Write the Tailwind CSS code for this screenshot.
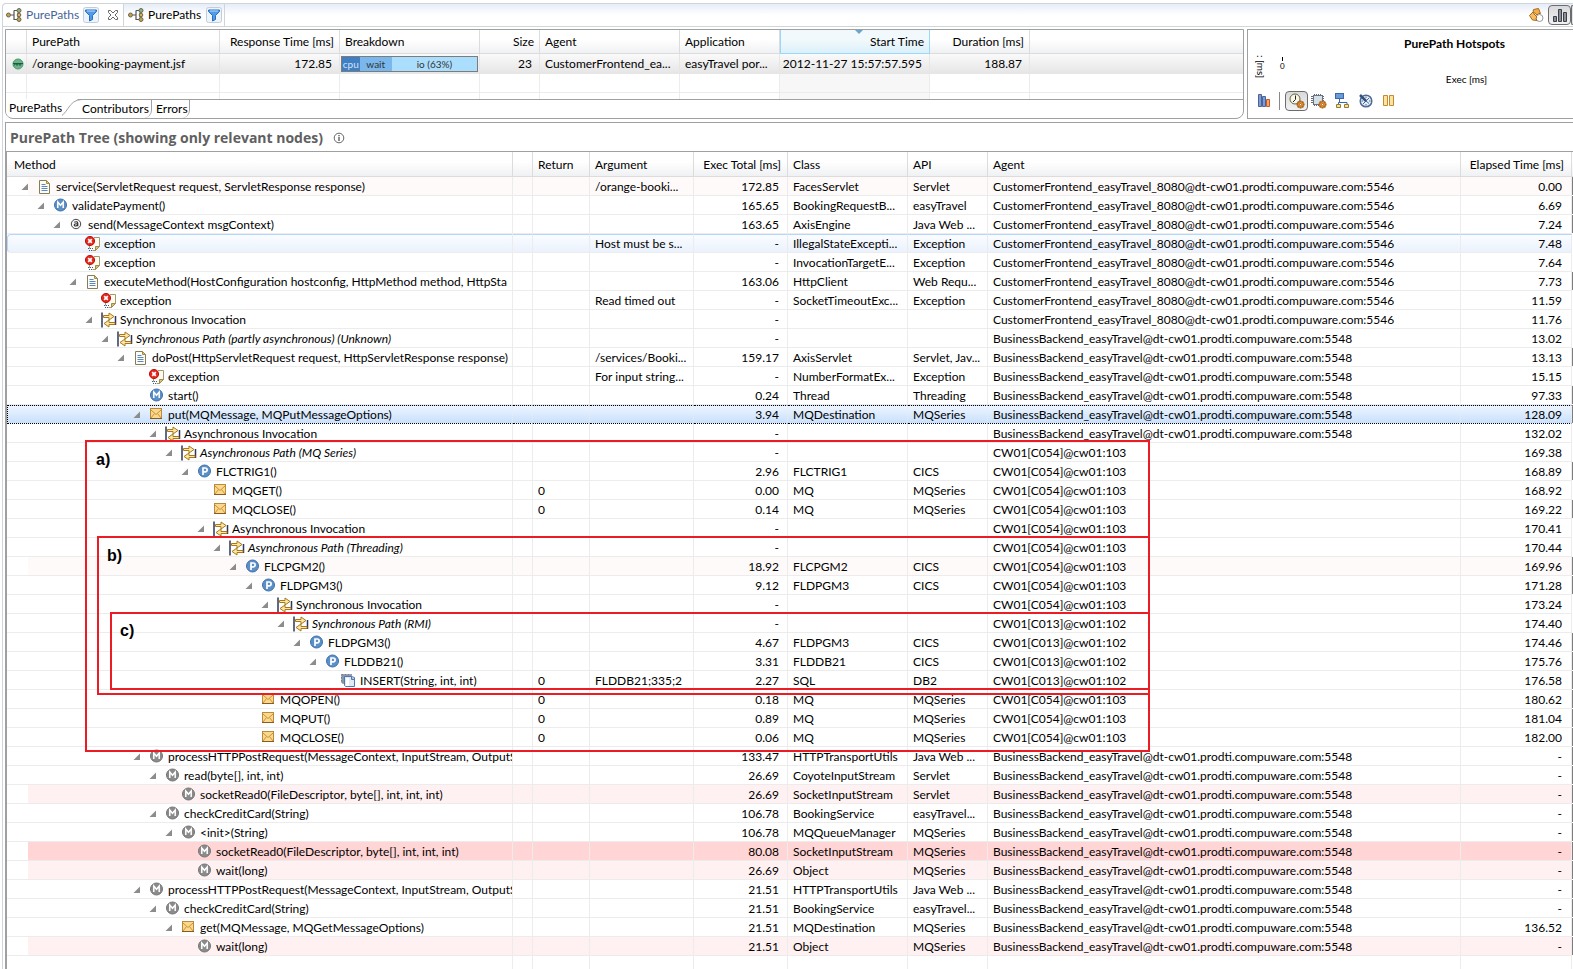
<!DOCTYPE html>
<html lang="en">
<head>
  <meta charset="UTF-8" />
  <meta name="viewport" content="width=device-width, initial-scale=1.0" />
  <title>PurePaths</title>
  <script src="https://cdn.jsdelivr.net/npm/@tailwindcss/browser@4"></script>
</head>
<body class="min-h-screen flex flex-col bg-white pt-[3px] pl-[2px] text-[12px] leading-[18px] text-black font-['Lato',sans-serif] overflow-x-hidden">

  <!-- icon set -->
  <svg class="hidden" aria-hidden="true">
    <symbol id="i-paths" viewBox="0 0 16 16">
      <path d="M5 8h3M8 3.500v9.500M8 3.500h3M8 12.500h3M12 5.500v5" fill="none" stroke="#555" stroke-width="1.200" />
      <circle cx="2.500" cy="8" r="2" fill="#c8a050" stroke="#6b6648" />
      <circle cx="13" cy="3.500" r="2" fill="#8fb08a" stroke="#6b6648" />
      <circle cx="13" cy="8" r="1.800" fill="#d8ae5c" stroke="#6b6648" />
      <circle cx="13" cy="12.500" r="2" fill="#c8a050" stroke="#6b6648" />
    </symbol>
    <symbol id="i-filter" viewBox="0 0 16 16">
      <rect x=".5" y=".5" width="15" height="15" rx="2" fill="#eef4fb" stroke="#c3cdd8" />
      <path d="M2.500 3h11v1.500L9.500 8.500v4L6.500 14V8.500L2.500 4.500z" fill="#4f9be8" stroke="#2a6cc0" />
      <path d="M4 4h8" stroke="#b9dcff" />
    </symbol>
    <symbol id="i-doc" viewBox="0 0 16 16">
      <path d="M2.500 1.500h7l3 3v10h-10z" fill="#fbfcf6" stroke="#857c58" />
      <path d="M9.500 1.500v3h3z" fill="#e5c67a" stroke="#a58a45" />
      <path d="M4.500 5.500h4M4.500 7.500h6M4.500 9.500h6M4.500 11.500h6" stroke="#5f86bd" />
    </symbol>
    <symbol id="i-m-blue" viewBox="0 0 16 16">
      <circle cx="7.500" cy="7" r="6" fill="#5b8fc8" stroke="#3f70ab" />
      <path d="M4.800 10v-6l2.700 3.300 2.700-3.300v6" fill="none" stroke="#fff" stroke-width="1.500" />
    </symbol>
    <symbol id="i-m-gray" viewBox="0 0 16 16">
      <circle cx="7.500" cy="7" r="6" fill="#8b8b8b" stroke="#757575" />
      <path d="M4.800 10v-6l2.700 3.300 2.700-3.300v6" fill="none" stroke="#fff" stroke-width="1.500" />
    </symbol>
    <symbol id="i-p" viewBox="0 0 16 16">
      <circle cx="7.500" cy="7" r="6" fill="#5b8fc8" stroke="#3f70ab" />
      <path d="M6 11v-7h2.200a1.900 1.900 0 0 1 0 3.900H6" fill="none" stroke="#fff" stroke-width="1.700" />
    </symbol>
    <symbol id="i-at" viewBox="0 0 16 16">
      <circle cx="7" cy="7" r="4.700" fill="#f8f8f8" stroke="#444" />
      <path d="M5.200 5.200q3.600-1.200 3.600 1v3M8.600 6.700q-3.400-.2-3.400 1.300c0 1.500 3 1.200 3.400-.3" fill="none" stroke="#333" stroke-width="1.100" />
    </symbol>
    <symbol id="i-exc" viewBox="0 0 16 16">
      <path d="M5 2h9v8.500L10.500 14H5z" fill="#fdfcf3" />
      <path d="M4.500 3.500v9h1M9 1.500h5.500v9l-4 4h-3" fill="none" stroke="#a39a6c" />
      <path d="M14.500 10.500h-4v4z" fill="#d9c27c" stroke="#a08a4a" />
      <path d="M3 12.500h5M4 14.500h4" stroke="#2f5fa8" stroke-dasharray="1 1" />
      <circle cx="5" cy="5" r="4.600" fill="#e4281e" stroke="#b81710" />
      <path d="M3.200 3.200l3.600 3.600M6.800 3.200l-3.600 3.600" stroke="#fff" stroke-width="1.700" />
    </symbol>
    <symbol id="i-inv" viewBox="0 0 16 16">
      <path d="M1 .500v15" stroke="#2d3658" stroke-width="1.500" />
      <path d="M14.500 4v9" stroke="#2d3658" stroke-width="1.500" />
      <path d="M2.500 3.500H8v-2.500l5 3.500-5 3.500V5.500H2.500z" fill="#fde7a0" stroke="#a9781c" />
      <path d="M14 12.500H8V15l-5-3.500L8 8v2.500h6z" fill="#fde7a0" stroke="#a9781c" />
    </symbol>
    <symbol id="i-mail" viewBox="0 0 16 16">
      <rect x="1.500" y="1.500" width="11" height="10" fill="#fbd98c" stroke="#b98b3e" />
      <path d="M2 3l5 4.500L12 3M2 11l3.500-4.500M12 11L8.500 6.500" fill="none" stroke="#cd9238" />
      <path d="M1 11.500h12" stroke="#8a5a20" />
    </symbol>
    <symbol id="i-sql" viewBox="0 0 16 16">
      <path d="M.500 1.500h10v9h-8l-2-1z" fill="#8a97ab" stroke="#6f7d92" stroke-dasharray="2 1" />
      <path d="M3.500 3.500h7l3 1v9h-9l-1-1z" fill="#dfeaf8" stroke="#5476a8" />
      <path d="M10.500 3v3.500h3" fill="#9fc0ea" stroke="#5476a8" />
      <path d="M6.500 5v8" stroke="#fff" stroke-width="3" />
    </symbol>
    <symbol id="i-gear" viewBox="0 0 10 10">
      <path d="M5 .500v9M.500 5h9M1.800 1.800l6.400 6.400M8.200 1.800L1.800 8.200" stroke="#a85d14" stroke-width="2" />
      <circle cx="5" cy="5" r="3.200" fill="#e89a3a" stroke="#a85d14" />
      <circle cx="5" cy="5" r="1.200" fill="#fff" stroke="#a85d14" />
    </symbol>
  </svg>

  <!-- view tabs -->
  <header class="flex h-[24px] items-stretch border border-r-0 border-[#cfd6da] bg-linear-to-b from-[#e6edf8] to-white to-50% rounded-tl">
    <div class="flex w-[121px] items-center bg-white pl-[3px] border-r border-[#cfd6da] rounded-tl">
      <svg class="size-4"><use href="#i-paths" /></svg>
      <button class="ml-1 w-[57px] text-left text-[#44659a]">PurePaths</button>
      <button aria-label="Filter"><svg class="size-4"><use href="#i-filter" /></svg></button>
      <button class="ml-2" aria-label="Close">
        <svg class="size-3" viewBox="0 0 12 12"><path d="M1.500 1.500h2L6 4l2.500-2.500h2v2L8 6l2.500 2.500v2h-2L6 8l-2.500 2.500h-2v-2L4 6 1.500 3.500z" fill="#fff" stroke="#666" /></svg>
      </button>
    </div>
    <div class="flex w-[101px] items-center pl-1 border-r border-[#cfd6da]">
      <svg class="size-4"><use href="#i-paths" /></svg>
      <button class="ml-1 w-[58px] text-left">PurePaths</button>
      <button aria-label="Filter"><svg class="size-4"><use href="#i-filter" /></svg></button>
    </div>
    <div class="ml-auto flex items-center gap-1">
      <button aria-label="Link with view">
        <svg class="size-4" viewBox="0 0 16 16">
          <circle cx="11.500" cy="11" r="3.500" fill="#fff" stroke="#999" />
          <path d="M5.500 2.500l5-1 2 5-2 0-1.500 1.500-4-3.500z" fill="#f0ae48" stroke="#a8671a" />
          <path d="M1.500 8.500l3.500-3.500 1 2 3 3-1 1.500 1 2-4.500-.5z" fill="#f5bd60" stroke="#a8671a" />
        </svg>
      </button>
      <button aria-label="Show chart" class="flex h-[20px] w-[23px] items-center justify-center rounded-sm border border-[#6c6c6c] bg-linear-to-b from-[#d8d9db] to-[#f2f2f3]">
        <svg class="size-4" viewBox="0 0 16 16"><path d="M1.500 9.500h3v5h-3zM6.500 2.500h3v12h-3zM11.500 5.500h3v9h-3z" fill="#8a9098" stroke="#3c4046" /></svg>
      </button>
      <div class="-ml-1 h-[20px] w-[2px] rounded-l-sm border border-r-0 border-[#6c6c6c] bg-[#e3e4e6]"></div>
    </div>
  </header>

  <div class="flex flex-col grow border-l border-[#cfd6da] pl-[2px]">

    <div class="mt-[2px] flex h-[90px] gap-[3px]">
      <!-- purepath list -->
      <section class="flex min-w-0 grow flex-col overflow-hidden rounded-b-lg border border-[#a0a0a0]">
        <div class="h-[70px] overflow-hidden border-b border-[#a0a0a0]">
          <table class="w-full table-fixed border-separate border-spacing-0 whitespace-nowrap">
            <colgroup>
              <col class="w-[21px]" /><col class="w-[193px]" /><col class="w-[120px]" /><col class="w-[140px]" /><col class="w-[60px]" />
              <col class="w-[140px]" /><col class="w-[100px]" /><col class="w-[150px]" /><col class="w-[100px]" /><col />
            </colgroup>
            <thead>
              <tr class="h-[24px] text-left *:border-r *:border-b *:border-[#dcdcdc] *:p-0 *:font-normal *:bg-linear-to-b *:from-white *:from-40% *:to-[#f0f1f3]">
                <th></th>
                <th><span class="pl-[5px]">PurePath</span></th>
                <th class="text-right"><span class="pr-[5px]">Response Time [ms]</span></th>
                <th><span class="pl-[5px]">Breakdown</span></th>
                <th class="text-right"><span class="pr-[5px]">Size</span></th>
                <th><span class="pl-[5px]">Agent</span></th>
                <th><span class="pl-[5px]">Application</span></th>
                <th class="relative border-x border-x-[#96d9f9]! border-b-[#96d9f9]! from-[#f2f9fc]! to-[#dcf0fa]! text-right">
                  <svg class="absolute top-0 left-1/2 h-1 w-2" viewBox="0 0 8 4"><path d="M0 0h8L4 4z" fill="#6aa5cc" /></svg>
                  <span class="pr-[5px]">Start Time</span>
                </th>
                <th class="text-right"><span class="pr-[5px]">Duration [ms]</span></th>
                <th class="border-r-0!"></th>
              </tr>
            </thead>
            <tbody>
              <tr class="h-[20px] *:border-r *:border-b *:border-[#e6e6e6] *:p-0 *:bg-linear-to-b *:from-[#fafafa] *:to-[#e6e6e6]">
                <td>
                  <svg class="ml-[6px] size-3" viewBox="0 0 12 12"><circle cx="6" cy="6" r="5" fill="#6bb38a" stroke="#4c9a70" /><path d="M1 5.500h10M2 7.500l1.500-2 1.500 2 1.500-2 1.500 2 1.500-2" fill="none" stroke="#1f5a3c" /></svg>
                </td>
                <td class="pl-[5px]!">/orange-booking-payment.jsf</td>
                <td class="pr-[7px]! text-right">172.85</td>
                <td>
                  <div class="ml-px mr-px flex h-[16px] border border-[#7c7c7c] text-center text-[10px] leading-[14px] text-[#333]">
                    <span class="bg-[#417fc3] text-[#cfe4f8]" style="width:13%">cpu</span>
                    <span class="bg-[#79b7ec]" style="width:24%">wait</span>
                    <span class="bg-[#abdefd]" style="width:63%">io (63%)</span>
                  </div>
                </td>
                <td class="pr-[7px]! text-right">23</td>
                <td class="pl-[5px]!">CustomerFrontend_ea...</td>
                <td class="pl-[5px]!">easyTravel por...</td>
                <td class="pr-[7px]! text-right">2012-11-27 15:57:57.595</td>
                <td class="pr-[7px]! text-right">188.87</td>
                <td class="border-r-0!"></td>
              </tr>
              <tr class="h-[19px] *:border-r *:border-b *:border-[#ececec]">
                <td></td><td></td><td></td><td></td><td></td><td></td><td></td><td class="bg-[#f7f7f7]"></td><td></td><td class="border-r-0!"></td>
              </tr>
              <tr class="h-[19px] *:border-r *:border-[#ececec]">
                <td></td><td></td><td></td><td></td><td></td><td></td><td></td><td class="bg-[#f7f7f7]"></td><td></td><td class="border-r-0!"></td>
              </tr>
            </tbody>
          </table>
        </div>
        <nav class="flex h-[18px]">
          <button class="-mt-px h-[18px] w-[56px] bg-white pl-[3px] text-left">PurePaths</button>
          <svg class="-mt-px h-[19px] w-[20px]" viewBox="0 0 20 19"><path d="M0 0h16L2 19H0z" fill="#fff" /><path d="M-6 18.500C6 18.500 5 .500 20 .500" fill="none" stroke="#a0a0a0" /></svg>
          <button class="w-[70px] rounded-br-lg border-r border-[#a0a0a0] text-left">Contributors</button>
          <button class="w-[38px] rounded-br-lg border-r border-[#a0a0a0] pl-[4px] text-left">Errors</button>
        </nav>
      </section>

      <!-- hotspots -->
      <section class="flex w-[326px] shrink-0 flex-col border border-r-0 border-[#a0a0a0]">
        <div class="relative flex h-[61px] flex-col items-center pl-[88px] pt-[5px]">
          <h2 class="font-bold">PurePath Hotspots</h2>
          <span class="absolute left-[6px] top-[25px] text-[10px] leading-[14px] [writing-mode:vertical-rl]">: [ms]</span>
          <span class="absolute left-[32px] top-[27px] flex flex-col items-center text-[8px] leading-[10px]"><i class="h-1 w-px bg-black"></i>0</span>
          <span class="mt-[17px] pl-[24px] text-[10px]">Exec [ms]</span>
        </div>
        <div class="flex items-center pl-[8px]">
          <button aria-label="Hotspots"><svg class="size-4" viewBox="0 0 16 16"><path d="M2.500 1.500h3v12h-3zM6.500 3.500h3v10h-3z" fill="#7f9cd0" stroke="#4a6398" /><path d="M10.500 6.500h3v7h-3z" fill="#f3a765" stroke="#c4582a" /></svg></button>
          <div class="ml-[7px] h-[18px] w-px bg-[#888]"></div>
          <button aria-label="Execution time" class="ml-[5px] flex h-[20px] w-[23px] items-center justify-center rounded-sm border border-[#6c6c6c] bg-linear-to-b from-[#d8d9db] to-[#f2f2f3]">
            <svg class="size-4" viewBox="0 0 16 16"><circle cx="6" cy="6" r="5" fill="#f8f7e6" stroke="#66643c" /><path d="M6.500 2.500V6.500L4 9" fill="none" stroke="#222" /><use href="#i-gear" x="7" y="7" width="9" height="9" /></svg>
          </button>
          <button aria-label="CPU" class="ml-[3px]"><svg class="size-4" viewBox="0 0 16 16"><path d="M3.500 1v12M5.500 1v12M7.500 1v12M9.500 1v12M13 3.500H0M13 5.500H0M13 7.500H0M13 9.500H0" stroke="#6b6b6b" /><rect x="2.500" y="2.500" width="9" height="9" fill="#d5dfe8" stroke="#657484" /><use href="#i-gear" x="7" y="7" width="9" height="9" /></svg></button>
          <button aria-label="Tree" class="ml-[8px]"><svg class="size-4" viewBox="0 0 16 16"><rect x=".5" y=".5" width="8" height="5" fill="#6a9bd8" stroke="#3a69a8" /><path d="M4.500 6v3.500M3.500 11.500V9.500h8.500v2" fill="none" stroke="#3a69a8" /><path d="M1.500 11.500h4v3h-4zM9.500 11.500h4v3h-4z" fill="#f3dfa0" stroke="#957c2c" /></svg></button>
          <button aria-label="Time frame" class="ml-[7px]"><svg class="size-4" viewBox="0 0 16 16"><circle cx="8" cy="8" r="5.800" fill="#e7eef7" stroke="#4c6b99" stroke-width="1.500" /><path d="M8 3.500v1.500M8 11v1.500M3.500 8h1.500M11 8h1.500M8 8l3 2.500M5 11l6-6" stroke="#4c6b99" /><path d="M2 2l6 6" stroke="#34527e" stroke-width="2.500" /></svg></button>
          <button aria-label="Pause" class="ml-[7px]"><svg class="size-4" viewBox="0 0 16 16"><path d="M2.500 2.500h4v10h-4zM8.500 2.500h4v10h-4z" fill="#fbe3a4" stroke="#c48a2c" /></svg></button>
        </div>
      </section>
    </div>

    <!-- purepath tree -->
    <section class="mt-[3px] flex grow flex-col border-t border-l border-[#a0a0a0]">
      <div class="flex h-[28px] items-center gap-[10px] pt-px pl-[4px]">
        <h1 class="text-[14px] font-bold text-[#606060] font-['Open_Sans',sans-serif]">PurePath Tree (showing only relevant nodes)</h1>
        <svg class="size-3" viewBox="0 0 12 12"><circle cx="6" cy="6" r="4.800" fill="#fff" stroke="#666" /><path d="M6 5v4M6 3v1.200" stroke="#555" stroke-width="1.300" /></svg>
      </div>
      <div class="relative grow border-t border-l border-[#a0a0a0]">
        <table class="w-full table-fixed border-separate border-spacing-0 whitespace-nowrap">
          <colgroup>
            <col class="w-[506px]" /><col class="w-[20px]" /><col class="w-[57px]" /><col class="w-[104px]" /><col class="w-[94px]" />
            <col class="w-[120px]" /><col class="w-[80px]" /><col /><col class="w-[111px]" /><col class="w-px" />
          </colgroup>
          <thead>
            <tr class="h-[25px] text-left *:overflow-hidden *:border-r *:border-b *:border-[#dcdcdc] *:p-0 *:pt-px *:font-normal *:bg-linear-to-b *:from-white *:from-40% *:to-[#f0f1f3]">
              <th><span class="pl-[7px]">Method</span></th>
              <th></th>
              <th><span class="pl-[5px]">Return</span></th>
              <th><span class="pl-[5px]">Argument</span></th>
              <th class="text-right"><span class="pr-[6px]">Exec Total [ms]</span></th>
              <th><span class="pl-[5px]">Class</span></th>
              <th><span class="pl-[5px]">API</span></th>
              <th><span class="pl-[5px]">Agent</span></th>
              <th class="text-right"><span class="pr-[7px]">Elapsed Time [ms]</span></th>
              <th class="border-r-0!"></th>
            </tr>
          </thead>
          <tbody id="tree"></tbody>
        </table>

        <!-- annotations over the tree -->
        <div class="pointer-events-none absolute left-[78px] top-[288px] h-[312px] w-[1065px] border-2 border-[#ec1c24]"></div>
        <div class="pointer-events-none absolute left-[90px] top-[384px] h-[159px] w-[1053px] border-2 border-[#ec1c24]"></div>
        <div class="pointer-events-none absolute left-[103px] top-[460px] h-[78px] w-[1040px] border-2 border-[#ec1c24]"></div>
        <span class="absolute left-[89px] top-[299px] text-[16px] font-bold font-['Liberation_Sans',sans-serif]">a)</span>
        <span class="absolute left-[100px] top-[395px] text-[16px] font-bold font-['Liberation_Sans',sans-serif]">b)</span>
        <span class="absolute left-[113px] top-[470px] text-[16px] font-bold font-['Liberation_Sans',sans-serif]">c)</span>
      </div>
    </section>
  </div>

  <script>
    const FRONT = 'CustomerFrontend_easyTravel_8080@dt-cw01.prodti.compuware.com:5546';
    const BACK = 'BusinessBackend_easyTravel@dt-cw01.prodti.compuware.com:5548';
    const C54 = 'CW01[C054]@cw01:103';
    const C13 = 'CW01[C013]@cw01:102';

    // depth, icon, method, return, argument, exec, class, api, agent, elapsed, tint
    const rows = [
      [0, 'doc', 'service(ServletRequest request, ServletResponse response)', '', '/orange-booki...', '172.85', 'FacesServlet', 'Servlet', FRONT, '0.00', 'faint'],
      [1, 'm-blue', 'validatePayment()', '', '', '165.65', 'BookingRequestB...', 'easyTravel', FRONT, '6.69'],
      [2, 'at', 'send(MessageContext msgContext)', '', '', '163.65', 'AxisEngine', 'Java Web ...', FRONT, '7.24'],
      [3, 'exc', 'exception', '', 'Host must be s...', '-', 'IllegalStateExcepti...', 'Exception', FRONT, '7.48', 'hover'],
      [3, 'exc', 'exception', '', '', '-', 'InvocationTargetE...', 'Exception', FRONT, '7.64'],
      [3, 'doc', 'executeMethod(HostConfiguration hostconfig, HttpMethod method, HttpSta', '', '', '163.06', 'HttpClient', 'Web Requ...', FRONT, '7.73'],
      [4, 'exc', 'exception', '', 'Read timed out', '-', 'SocketTimeoutExc...', 'Exception', FRONT, '11.59'],
      [4, 'inv', 'Synchronous Invocation', '', '', '-', '', '', FRONT, '11.76'],
      [5, 'inv', 'Synchronous Path (partly asynchronous) (Unknown)', '', '', '-', '', '', BACK, '13.02'],
      [6, 'doc', 'doPost(HttpServletRequest request, HttpServletResponse response)', '', '/services/Booki...', '159.17', 'AxisServlet', 'Servlet, Jav...', BACK, '13.13'],
      [7, 'exc', 'exception', '', 'For input string...', '-', 'NumberFormatEx...', 'Exception', BACK, '15.15'],
      [7, 'm-blue', 'start()', '', '', '0.24', 'Thread', 'Threading', BACK, '97.33'],
      [7, 'mail', 'put(MQMessage, MQPutMessageOptions)', '', '', '3.94', 'MQDestination', 'MQSeries', BACK, '128.09', 'selected'],
      [8, 'inv', 'Asynchronous Invocation', '', '', '-', '', '', BACK, '132.02'],
      [9, 'inv', 'Asynchronous Path (MQ Series)', '', '', '-', '', '', C54, '169.38'],
      [10, 'p', 'FLCTRIG1()', '', '', '2.96', 'FLCTRIG1', 'CICS', C54, '168.89'],
      [11, 'mail', 'MQGET()', '0', '', '0.00', 'MQ', 'MQSeries', C54, '168.92'],
      [11, 'mail', 'MQCLOSE()', '0', '', '0.14', 'MQ', 'MQSeries', C54, '169.22'],
      [11, 'inv', 'Asynchronous Invocation', '', '', '-', '', '', C54, '170.41'],
      [12, 'inv', 'Asynchronous Path (Threading)', '', '', '-', '', '', C54, '170.44'],
      [13, 'p', 'FLCPGM2()', '', '', '18.92', 'FLCPGM2', 'CICS', C54, '169.96', 'faint'],
      [14, 'p', 'FLDPGM3()', '', '', '9.12', 'FLDPGM3', 'CICS', C54, '171.28'],
      [15, 'inv', 'Synchronous Invocation', '', '', '-', '', '', C54, '173.24'],
      [16, 'inv', 'Synchronous Path (RMI)', '', '', '-', '', '', C13, '174.40'],
      [17, 'p', 'FLDPGM3()', '', '', '4.67', 'FLDPGM3', 'CICS', C13, '174.46'],
      [18, 'p', 'FLDDB21()', '', '', '3.31', 'FLDDB21', 'CICS', C13, '175.76'],
      [19, 'sql', 'INSERT(String, int, int)', '0', 'FLDDB21;335;2', '2.27', 'SQL', 'DB2', C13, '176.58'],
      [14, 'mail', 'MQOPEN()', '0', '', '0.18', 'MQ', 'MQSeries', C54, '180.62'],
      [14, 'mail', 'MQPUT()', '0', '', '0.89', 'MQ', 'MQSeries', C54, '181.04'],
      [14, 'mail', 'MQCLOSE()', '0', '', '0.06', 'MQ', 'MQSeries', C54, '182.00'],
      [7, 'm-gray', 'processHTTPPostRequest(MessageContext, InputStream, OutputS', '', '', '133.47', 'HTTPTransportUtils', 'Java Web ...', BACK, '-'],
      [8, 'm-gray', 'read(byte[], int, int)', '', '', '26.69', 'CoyoteInputStream', 'Servlet', BACK, '-'],
      [9, 'm-gray', 'socketRead0(FileDescriptor, byte[], int, int, int)', '', '', '26.69', 'SocketInputStream', 'Servlet', BACK, '-', 'warm'],
      [8, 'm-gray', 'checkCreditCard(String)', '', '', '106.78', 'BookingService', 'easyTravel...', BACK, '-'],
      [9, 'm-gray', '<init>(String)', '', '', '106.78', 'MQQueueManager', 'MQSeries', BACK, '-'],
      [10, 'm-gray', 'socketRead0(FileDescriptor, byte[], int, int, int)', '', '', '80.08', 'SocketInputStream', 'MQSeries', BACK, '-', 'hot'],
      [10, 'm-gray', 'wait(long)', '', '', '26.69', 'Object', 'MQSeries', BACK, '-', 'warm'],
      [7, 'm-gray', 'processHTTPPostRequest(MessageContext, InputStream, OutputS', '', '', '21.51', 'HTTPTransportUtils', 'Java Web ...', BACK, '-'],
      [8, 'm-gray', 'checkCreditCard(String)', '', '', '21.51', 'BookingService', 'easyTravel...', BACK, '-'],
      [9, 'mail', 'get(MQMessage, MQGetMessageOptions)', '', '', '21.51', 'MQDestination', 'MQSeries', BACK, '136.52'],
      [10, 'm-gray', 'wait(long)', '', '', '21.51', 'Object', 'MQSeries', BACK, '-', 'warm'],
    ];

    // [first cell, other cells]
    const tints = {
      faint: ['bg-[linear-gradient(to_right,#fff_21px,#fffafa_21px)]', 'bg-[#fffafa]'],
      warm: ['bg-[linear-gradient(to_right,#fff_21px,#fff1f1_21px)]', 'bg-[#fff1f1]'],
      hot: ['bg-[linear-gradient(to_right,#fff_21px,#ffd5d5_21px)]', 'bg-[#ffd5d5]'],
      hover: ['border-t border-t-[#b8d6fb] border-l border-l-[#b8d6fb] rounded-l-sm bg-linear-to-b from-[#fafcff] to-[#ebf2fd]', 'border-t border-t-[#b8d6fb] bg-linear-to-b from-[#fafcff] to-[#ebf2fd]'],
      selected: ['border-y border-l border-dotted border-y-black! border-l-black bg-linear-to-b from-[#edf5ff] to-[#c9e0fc]', 'border-y border-dotted border-y-black! bg-linear-to-b from-[#edf5ff] to-[#c9e0fc]'],
    };

    const esc = (s) => s.replace(/</g, '&lt;').replace(/>/g, '&gt;');
    const body = document.getElementById('tree');

    rows.forEach((r, i) => {
      const [depth, icon, method, ret, arg, exec, cls, api, agent, elapsed, tint] = r;
      const [first, rest] = tints[tint] || ['', ''];
      const open = rows[i + 1] && rows[i + 1][0] > depth;
      const italic = method.includes(' Path (') ? 'italic' : '';
      const cell = `overflow-hidden border-r border-b border-[#ececec] p-0 ${rest}`;
      const toggle = open
        ? '<button class="w-2 shrink-0" aria-label="Collapse"><svg class="h-2 w-2" viewBox="0 0 8 8"><path d="M7 .500V7H.500z" fill="#8c8c8c" /></svg></button>'
        : '<span class="w-2 shrink-0"></span>';
      body.insertAdjacentHTML('beforeend', `
        <tr class="h-[19px]">
          <td class="overflow-hidden border-r border-b border-[#ececec] p-0 ${first}">
            <div class="flex h-[17px] items-center pt-px" style="padding-left:${(tint === 'hover' || tint === 'selected' ? 13 : 14) + depth * 16}px">
              ${toggle}
              <svg class="ml-2 mr-[3px] size-4 shrink-0"><use href="#i-${icon}" /></svg>
              <span class="${italic}">${esc(method)}</span>
            </div>
          </td>
          <td class="${cell}"></td>
          <td class="${cell}"><div class="h-[17px] pl-[5px]">${ret}</div></td>
          <td class="${cell}"><div class="h-[17px] pl-[5px]">${arg}</div></td>
          <td class="${cell}"><div class="h-[17px] pr-[8px] text-right">${exec}</div></td>
          <td class="${cell}"><div class="h-[17px] pl-[5px]">${cls}</div></td>
          <td class="${cell}"><div class="h-[17px] pl-[5px]">${api}</div></td>
          <td class="${cell}"><div class="h-[17px] pl-[5px]">${agent}</div></td>
          <td class="${cell}"><div class="h-[17px] pr-[9px] text-right">${elapsed}</div></td>
          <td class="border-b border-white p-0 ${parseFloat(exec) > 0 ? 'bg-[#7d7d7d]' : ''}"></td>
        </tr>`);
    });

    // blank strip under the last node
    body.insertAdjacentHTML('beforeend', `<tr class="h-[13px]">${'<td class="border-r border-[#ececec] p-0"></td>'.repeat(9)}<td class="p-0"></td></tr>`);
  </script>
</body>
</html>
